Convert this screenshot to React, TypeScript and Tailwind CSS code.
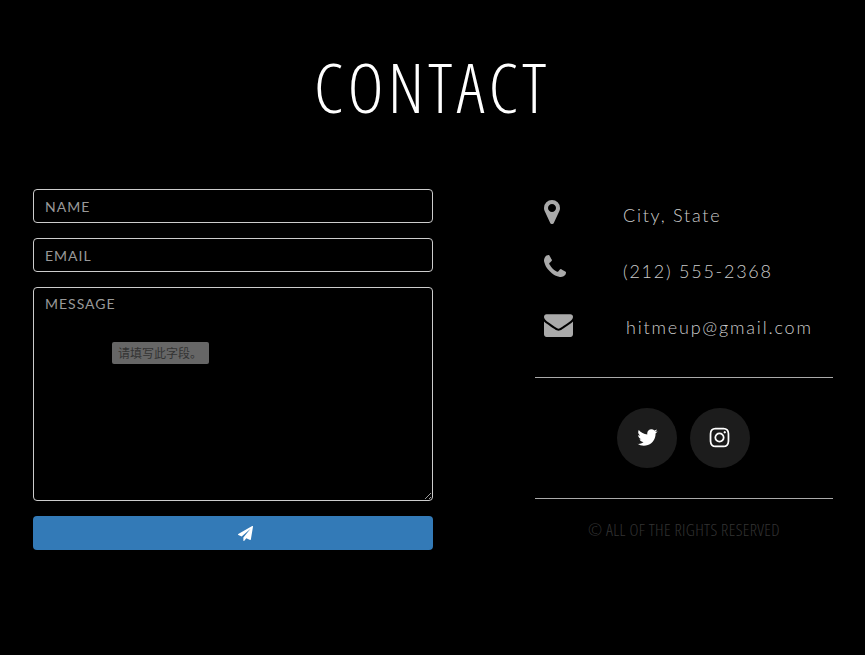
function FA({ d, className }: { d: string; className?: string }) {
  return (
    <svg viewBox="0 0 1792 1792" fill="currentColor" className={className}>
      <path d={d} />
    </svg>
  );
}

const marker = "M1152 640q0-106-75-181t-181-75-181 75-75 181 75 181 181 75 181-75 75-181zm256 0q0 109-33 179l-364 774q-16 33-47.5 52t-67.5 19-67.5-19-46.5-52l-365-774q-33-70-33-179 0-212 150-362t362-150 362 150 150 362z";
const phone = "M1600 1240q0 27-10 70.5t-21 68.5q-21 50-122 106-94 51-186 51-27 0-52.5-3.5t-57.5-12.5-47.5-14.5-55.5-20.5-49-18q-98-35-175-83-128-79-264.5-215.5t-215.5-264.5q-48-77-83-175-3-9-18-49t-20.5-55.5-14.5-47.5-12.5-57.5-3.5-52.5q0-92 51-186 56-101 106-122 25-11 68.5-21t70.5-10q14 0 21 3 18 6 53 76 11 19 30 54t35 63.5 31 53.5q3 4 17.5 25t21.5 35.5 7 28.5q0 20-28.5 50t-62 55-62 53-28.5 46q0 9 5 22.5t8.5 20.5 14 24 11.5 19q76 137 174 235t235 174q2 1 19 11.5t24 14 20.5 8.5 22.5 5q18 0 46-28.5t53-62 55-62 50-28.5q14 0 28.5 7t35.5 21.5 25 17.5q25 15 53.5 31t63.5 35 54 30q70 35 76 53 3 7 3 21z";
const envelope = "M1792 710v794q0 66-47 113t-113 47h-1472q-66 0-113-47t-47-113v-794q44 49 101 87 362 246 497 345 57 42 92.5 65.5t94.5 48 110 24.5h2q51 0 110-24.5t94.5-48 92.5-65.5q170-123 498-345 57-39 100-87zm0-294q0 79-49 151t-122 123q-376 261-468 325-10 7-42.5 30.5t-54 38-52 32.5-57.5 27-50 9h-2q-23 0-50-9t-57.5-27-52-32.5-54-38-42.5-30.5q-91-64-262-182.5t-205-142.5q-62-42-117-115.5t-55-136.5q0-78 41.5-130t118.5-52h1472q65 0 112.5 47t47.5 113z";
const twitter = "M1684 408q-67 98-162 167 1 14 1 42 0 130-38 259.5t-115.5 248.5-184.5 210.5-258 146-323 54.5q-271 0-496-145 35 4 76 4 225 0 401-138-105-2-188-64.5t-114-159.5q33 5 61 5 43 0 85-11-112-23-185.5-111.5t-73.5-205.5v-4q68 38 146 41-66-44-105-115t-39-154q0-88 44-163 121 149 294.5 238.5t371.5 99.5q-8-38-8-74 0-134 94.5-228.5t228.5-94.5q140 0 236 102 109-21 205-78-37 115-142 178 91-10 186-51z";
const instagram = "M1152 896q0-106-75-181t-181-75-181 75-75 181 75 181 181 75 181-75 75-181zm138 0q0 164-115 279t-279 115-279-115-115-279 115-279 279-115 279 115 115 279zm108-410q0 38-27 65t-65 27-65-27-27-65 27-65 65-27 65 27 27 65zm-502-222q-7 0-76.5-.5t-105.5 0-96.5 3-103 10-71.5 18.5q-50 20-88 58t-58 88q-11 29-18.5 71.5t-10 103-3 96.5 0 105.5.5 76.5-.5 76.5 0 105.5 3 96.5 10 103 18.5 71.5q20 50 58 88t88 58q29 11 71.5 18.5t103 10 96.5 3 105.5 0 76.5-.5 76.5.5 105.5 0 96.5-3 103-10 71.5-18.5q50-20 88-58t58-88q11-29 18.5-71.5t10-103 3-96.5 0-105.5-.5-76.5.5-76.5 0-105.5-3-96.5-10-103-18.5-71.5q-20-50-58-88t-88-58q-29-11-71.5-18.5t-103-10-96.5-3-105.5 0-76.5.5zm768 632q0 229-5 317-10 208-124 322t-322 124q-88 5-317 5t-317-5q-208-10-322-124t-124-322q-5-88-5-317t5-317q10-208 124-322t322-124q88-5 317-5t317 5q208 10 322 124t124 322q5 88 5 317z";
const plane = "M1764 11q33 24 27 64l-256 1536q-5 29-32 45-14 8-31 8-11 0-24-5l-453-185-242 295q-18 23-49 23-13 0-22-4-19-7-30.5-23.5t-11.5-36.5v-349l864-1059-1069 925-395-162q-37-14-40-55-2-40 32-59l1664-960q15-9 32-9 20 0 36 11z";

const field = "rounded-[4px] border border-[#ccc] bg-black px-[11px] text-[14px] tracking-[1px] text-[#999] placeholder:text-[#999] outline-none";

export default function App() {
  return (
    <div className="min-h-[655px] bg-black font-['Lato',sans-serif] overflow-hidden">
      <div className="pt-[49px] h-[189px] text-center">
        <h1 className="text-[68px] leading-[76px] font-light tracking-[4.5px] text-white font-['Open_Sans',sans-serif] [font-stretch:75%]">
          CONTACT
        </h1>
      </div>
      <div className="flex pl-[33px] pr-[32px] justify-between">
        <form className="w-[400px] flex flex-col gap-[15px] relative">
          <input placeholder="NAME" className={`h-[34px] ${field}`} />
          <input placeholder="EMAIL" className={`h-[34px] ${field}`} />
          <textarea placeholder="MESSAGE" className={`h-[214px] py-[6px] leading-[20px] ${field}`} />
          <button type="button" className="h-[34px] rounded-[4px] bg-[#337ab7] flex items-center justify-center text-white">
            <FA d={plane} className="w-[15px] h-[15px] ml-[24px]" />
          </button>
          <div className="absolute left-[79px] top-[153px] w-[97px] h-[22px] rounded-[2px] bg-[#666] text-[#333] text-[12px] leading-[22px] pl-[6px] font-['Noto_Sans_CJK_SC',sans-serif]">
            请填写此字段。
          </div>
        </form>
        <div className="w-[298px]">
          <div className="text-[#aaa] flex flex-col">
            <div className="flex h-[56px] items-start">
              <FA d={marker} className="w-[28px] h-[28px] mt-[9px] shrink-0 ml-[3px]" />
              <span className="ml-[57px] mt-[13px] font-light text-[18px] leading-[26px] tracking-[1.75px] text-[#ccc]">City, State</span>
            </div>
            <div className="flex h-[56px] items-start">
              <FA d={phone} className="w-[28px] h-[28px] mt-[8px] shrink-0 ml-[6px]" />
              <span className="ml-[54px] mt-[13px] font-light text-[18px] leading-[26px] tracking-[1.75px] text-[#ccc]">(212) 555-2368</span>
            </div>
            <div className="flex h-[56px] items-start">
              <FA d={envelope} className="w-[29px] h-[29px] mt-[9px] shrink-0 ml-[9px]" />
              <span className="ml-[53px] mt-[13px] font-light text-[18px] leading-[26px] tracking-[1.8px] text-[#ccc]">hitmeup@gmail.com</span>
            </div>
          </div>
          <div className="mt-[20px] h-px bg-[#aaa]" />
          <div className="flex gap-[13px] py-[30px] pl-[82px]">
            <a className="w-[60px] h-[60px] rounded-full bg-[#1c1c1c] flex items-center justify-center text-white"><FA d={twitter} className="w-[23px] h-[23px] mb-[2px]" /></a>
            <a className="w-[60px] h-[60px] rounded-full bg-[#1c1c1c] flex items-center justify-center text-white"><FA d={instagram} className="w-[23px] h-[23px] mr-[2px] mb-[2px]" /></a>
          </div>
          <div className="h-px bg-[#aaa]" />
          <p className="mt-[21px] text-center text-[17px] leading-[20px] font-light tracking-[0.35px] text-[#333] font-['Open_Sans',sans-serif] [font-stretch:75%]">
            © ALL OF THE RIGHTS RESERVED
          </p>
        </div>
      </div>
    </div>
  );
}
